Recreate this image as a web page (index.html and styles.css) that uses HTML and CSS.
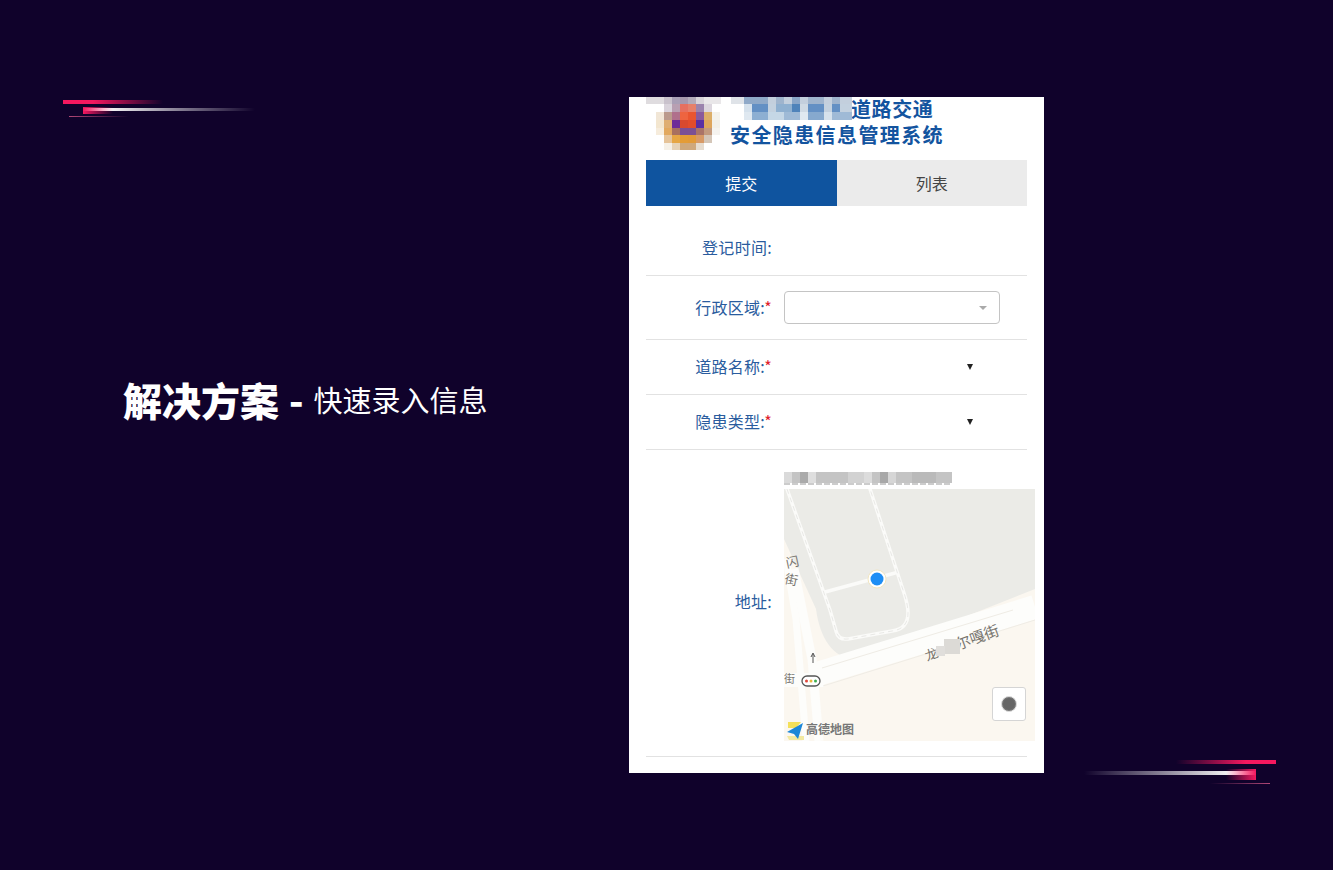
FILE: index.html
```html
<!DOCTYPE html>
<html lang="zh-CN">
<head>
    <meta charset="UTF-8">
    <title>解决方案 - 快速录入信息</title>
    <link rel="stylesheet" href="styles.css">
</head>
<body>
    <div class="slide">
        <!-- decorative streaks -->
        <div class="streaks streaks-top">
            <div class="streak-red"></div>
            <div class="streak-white"></div>
            <div class="streak-block"></div>
            <div class="streak-thin"></div>
        </div>
        <div class="streaks streaks-bottom">
            <div class="streak-red"></div>
            <div class="streak-white"></div>
            <div class="streak-block"></div>
            <div class="streak-thin"></div>
        </div>

        <h1 class="headline"><strong>解决方案</strong><b class="dash">-</b><span>快速录入信息</span></h1>

        <div class="phone">
            <header class="app-header">
                <svg class="logo-mosaic" width="76" height="53" viewBox="0 0 76 53" shape-rendering="crispEdges">
                    <rect x="0" y="0" width="18" height="7" fill="#dfdcdf"/>
                    <rect x="18" y="0" width="8" height="7" fill="#c9c2cc"/>
                    <rect x="26" y="0" width="8" height="7" fill="#a99fb6"/>
                    <rect x="34" y="0" width="8" height="7" fill="#a698ad"/>
                    <rect x="42" y="0" width="8" height="7" fill="#b3abba"/>
                    <rect x="50" y="0" width="8" height="7" fill="#d8d4da"/>
                    <rect x="58" y="0" width="17" height="7" fill="#e9e7e9"/>
                    <rect x="18" y="7" width="8" height="8" fill="#d9d3db"/>
                    <rect x="26" y="7" width="8" height="8" fill="#b89fb2"/>
                    <rect x="34" y="7" width="8" height="8" fill="#e6705f"/>
                    <rect x="42" y="7" width="8" height="8" fill="#e6806a"/>
                    <rect x="50" y="7" width="8" height="8" fill="#9b83ad"/>
                    <rect x="58" y="7" width="8" height="8" fill="#dcd6de"/>
                    <rect x="10" y="15" width="8" height="8" fill="#f1e6d6"/>
                    <rect x="18" y="15" width="8" height="8" fill="#bb9a8c"/>
                    <rect x="26" y="15" width="8" height="8" fill="#b0708c"/>
                    <rect x="34" y="15" width="8" height="8" fill="#ee6440"/>
                    <rect x="42" y="15" width="8" height="8" fill="#ea5530"/>
                    <rect x="50" y="15" width="8" height="8" fill="#8a5a9c"/>
                    <rect x="58" y="15" width="8" height="8" fill="#dcae68"/>
                    <rect x="66" y="15" width="8" height="8" fill="#f4f2ec"/>
                    <rect x="10" y="23" width="8" height="8" fill="#f3e6cf"/>
                    <rect x="18" y="23" width="8" height="8" fill="#dfae72"/>
                    <rect x="26" y="23" width="8" height="8" fill="#6e2c98"/>
                    <rect x="34" y="23" width="8" height="8" fill="#d8492f"/>
                    <rect x="42" y="23" width="8" height="8" fill="#e24c2c"/>
                    <rect x="50" y="23" width="8" height="8" fill="#5a2fa4"/>
                    <rect x="58" y="23" width="8" height="8" fill="#dea55c"/>
                    <rect x="66" y="23" width="8" height="8" fill="#f2efe8"/>
                    <rect x="10" y="31" width="8" height="7" fill="#f6ecdc"/>
                    <rect x="18" y="31" width="8" height="7" fill="#e2a85e"/>
                    <rect x="26" y="31" width="8" height="7" fill="#a8705f"/>
                    <rect x="34" y="31" width="8" height="7" fill="#7b4f96"/>
                    <rect x="42" y="31" width="8" height="7" fill="#7c5094"/>
                    <rect x="50" y="31" width="8" height="7" fill="#aa7468"/>
                    <rect x="58" y="31" width="8" height="7" fill="#c39a7e"/>
                    <rect x="66" y="31" width="8" height="7" fill="#f5f3ef"/>
                    <rect x="18" y="38" width="8" height="8" fill="#e6c49a"/>
                    <rect x="26" y="38" width="8" height="8" fill="#e6a644"/>
                    <rect x="34" y="38" width="8" height="8" fill="#e49c36"/>
                    <rect x="42" y="38" width="8" height="8" fill="#e29a38"/>
                    <rect x="50" y="38" width="8" height="8" fill="#d89a66"/>
                    <rect x="58" y="38" width="8" height="8" fill="#d4c6b8"/>
                    <rect x="18" y="46" width="8" height="7" fill="#f6f1e8"/>
                    <rect x="26" y="46" width="8" height="7" fill="#e6d2b6"/>
                    <rect x="34" y="46" width="8" height="7" fill="#cfa87a"/>
                    <rect x="42" y="46" width="8" height="7" fill="#cfa87c"/>
                    <rect x="50" y="46" width="8" height="7" fill="#e6dccf"/>
                </svg>
                <svg class="title-mosaic" width="121" height="23" viewBox="0 0 121 23" shape-rendering="crispEdges">
                    <rect x="0" y="0" width="13" height="7" fill="#dfe3e8"/>
                    <rect x="13" y="0" width="108" height="7" fill="#c3cfdd"/>
                    <rect x="13" y="0" width="24" height="7" fill="#8fa9c8"/>
                    <rect x="45" y="0" width="8" height="7" fill="#9fb4cd"/>
                    <rect x="61" y="0" width="8" height="7" fill="#8aa6c8"/>
                    <rect x="77" y="0" width="16" height="7" fill="#9fb4cd"/>
                    <rect x="101" y="0" width="8" height="7" fill="#9fb4cd"/>
                    <rect x="13" y="7" width="8" height="8" fill="#d5e1ec"/>
                    <rect x="21" y="7" width="16" height="8" fill="#6390c4"/>
                    <rect x="37" y="7" width="8" height="8" fill="#c3d1df"/>
                    <rect x="45" y="7" width="16" height="8" fill="#8fb0d0"/>
                    <rect x="61" y="7" width="8" height="8" fill="#4f83ba"/>
                    <rect x="69" y="7" width="8" height="8" fill="#cfdae4"/>
                    <rect x="77" y="7" width="16" height="8" fill="#6390c4"/>
                    <rect x="93" y="7" width="8" height="8" fill="#c3d1df"/>
                    <rect x="101" y="7" width="8" height="8" fill="#6390c4"/>
                    <rect x="109" y="7" width="12" height="8" fill="#c3d1df"/>
                    <rect x="13" y="15" width="8" height="8" fill="#dfe8f0"/>
                    <rect x="21" y="15" width="16" height="8" fill="#8dafd2"/>
                    <rect x="37" y="15" width="16" height="8" fill="#c5d7e6"/>
                    <rect x="53" y="15" width="16" height="8" fill="#9fbad6"/>
                    <rect x="69" y="15" width="8" height="8" fill="#e0e9f0"/>
                    <rect x="77" y="15" width="16" height="8" fill="#86a9ce"/>
                    <rect x="93" y="15" width="8" height="8" fill="#d6e2ec"/>
                    <rect x="101" y="15" width="20" height="8" fill="#9fbad6"/>
                </svg>
                <div class="app-title">
                    <div class="title-line-one">道路交通</div>
                    <div class="title-line-two">安全隐患信息管理系统</div>
                </div>
            </header>

            <nav class="tabs">
                <div class="tab tab-active">提交</div>
                <div class="tab">列表</div>
            </nav>

            <form class="form">
                <div class="form-row row-time">
                    <label class="form-label">登记时间:</label>
                </div>
                <div class="form-row row-region">
                    <label class="form-label">行政区域:<i>*</i></label>
                    <div class="select-box"><span class="select-arrow"></span></div>
                </div>
                <div class="form-row row-plain">
                    <label class="form-label">道路名称:<i>*</i></label>
                    <span class="native-arrow"></span>
                </div>
                <div class="form-row row-plain">
                    <label class="form-label">隐患类型:<i>*</i></label>
                    <span class="native-arrow"></span>
                </div>
                <div class="form-row row-address">
                    <label class="form-label">地址:</label>
                    <div class="address-field">
                        <svg class="coords-mosaic" width="168" height="14" viewBox="0 0 168 14" shape-rendering="crispEdges">
                            <rect width="168" height="11" fill="#c4c4c4"/>
                            <rect x="0" width="8" height="11" fill="#dadada"/>
                            <rect x="16" width="8" height="11" fill="#aaaaaa"/>
                            <rect x="24" width="8" height="11" fill="#dedede"/>
                            <rect x="64" width="16" height="11" fill="#d2d2d2"/>
                            <rect x="80" width="8" height="11" fill="#dcdcdc"/>
                            <rect x="96" width="8" height="11" fill="#a8a8a8"/>
                            <rect x="104" width="8" height="11" fill="#d6d6d6"/>
                            <rect x="128" width="24" height="11" fill="#bababa"/>
                            <path d="M0 12H168" stroke="#cccccc" stroke-width="2" stroke-dasharray="6 2"/>
                        </svg>
                        <div class="map">
                            <svg class="map-canvas" width="251" height="252" viewBox="0 0 251 252">
                                <rect width="251" height="252" fill="#ebebe7"/>
                                <path d="M0 252V50L32 120C36 150 50 172 75 170L251 100V252Z" fill="#fbf7f0"/>
                                <path d="M30 186L251 118" stroke="#fdfdfb" stroke-width="24" fill="none"/>
                                <path d="M0 191H40" stroke="#fdfdfb" stroke-width="14" fill="none"/>
                                <path d="M2 70L12 130L22 252" stroke="#fdfdfb" stroke-width="7" fill="none"/>
                                <path d="M10 80L28 170L35 252" stroke="#fdfdfb" stroke-width="9" fill="none"/>
                                <path d="M38 179L229 121M39 197L251 131" stroke="#efece5" stroke-width="1" fill="none"/>
                                <path d="M3 0L46 121L52 142Q54 151 64 150L108 142Q124 140 124 124Q124 116 120 104L86 0M41 103L111 84" stroke="#fbfbf9" stroke-width="3.500" fill="none" stroke-linecap="round"/>
                                <path d="M3 0L46 121L52 142Q54 151 64 150L108 142Q124 140 124 124Q124 116 120 104L86 0" stroke="#dcdcd8" stroke-width=".6" stroke-dasharray="5 4" fill="none"/>
                                <circle cx="93" cy="90" r="9" fill="#fff" stroke="#f2e6c0" stroke-width="1"/>
                                <circle cx="93" cy="90" r="6.500" fill="#1e8ef5"/>
                                <text class="map-label" transform="translate(3 79) rotate(-12)">闪</text>
                                <text class="map-label" transform="translate(0 94) rotate(12)">街</text>
                                <text class="map-label map-label-small" x="0" y="194">街</text>
                                <text class="map-label" transform="translate(143 172) rotate(-20)">龙</text>
                                <text class="map-label map-label-large" transform="translate(174 161) rotate(-20)">尔嘎街</text>
                                <rect x="160" y="150" width="16" height="15" fill="#dcdad6"/>
                                <rect x="152" y="157" width="9" height="10" fill="#e0dedb"/>
                                <path d="M29 174V165M27 168L29 164L31 168" stroke="#555" stroke-width="1" fill="none"/>
                                <rect x="18" y="187" width="18" height="10" rx="5" fill="#fff" stroke="#555" stroke-width="1.300"/>
                                <circle cx="22.500" cy="192" r="1.500" fill="#e0473c"/>
                                <circle cx="27" cy="192" r="1.500" fill="#e8b83c"/>
                                <circle cx="31.500" cy="192" r="1.500" fill="#3fae52"/>
                                <path d="M4 233H17L12 239H4Z" fill="#f4e05a"/>
                                <path d="M3 247H20V251H5Z" fill="#f3e9a0"/>
                                <path d="M19 234L3 243L10 245L14 250Z" fill="#1c87d8"/>
                                <text class="map-brand" x="22" y="245">高德地图</text>
                            </svg>
                            <div class="locate-button"><span class="locate-dot"></span></div>
                        </div>
                    </div>
                </div>
            </form>
        </div>
    </div>
</body>
</html>
```
FILE: styles.css
```css
* {
    box-sizing: border-box;
    margin: 0;
    padding: 0;
}

body {
    background: #10022b;
    font-family: "Noto Sans CJK SC", "Noto Sans", sans-serif;
    overflow: hidden;
}

.slide {
    position: relative;
    display: flex;
    align-items: flex-start;
    width: 1333px;
    height: 870px;
    padding: 97px 0 0 123px;
}

/* streaks */
.streaks {
    position: absolute;
    width: 200px;
    height: 26px;
}

.streaks div {
    position: absolute;
}

.streaks-top {
    left: 63px;
    top: 99px;
}

.streaks-bottom {
    left: 1076px;
    top: 759px;
    transform: scaleX(-1);
}

.streak-red {
    left: 0;
    top: 1px;
    width: 100px;
    height: 4px;
    background: linear-gradient(to right, #f5185f, #f5185f 30%, rgba(245, 24, 95, 0));
}

.streak-white {
    left: 20px;
    top: 9px;
    width: 172px;
    height: 3px;
    background: linear-gradient(to right, #fff, #fff 12%, rgba(255, 255, 255, 0.5) 55%, rgba(255, 255, 255, 0));
}

.streak-block {
    left: 20px;
    top: 8px;
    width: 30px;
    height: 7px;
    background: linear-gradient(to right, #f5185f, rgba(245, 24, 95, 0));
}

.streak-thin {
    left: 6px;
    top: 17px;
    width: 60px;
    height: 1px;
    background: linear-gradient(to right, rgba(245, 100, 150, 0.7), rgba(245, 24, 95, 0));
}

.streaks-bottom .streak-white {
    top: 12px;
    height: 4px;
}

.streaks-bottom .streak-block {
    top: 10px;
    height: 11px;
}

.streaks-bottom .streak-thin {
    top: 24px;
}

/* headline */
.headline {
    display: flex;
    align-items: center;
    width: 506px;
    margin-top: 275px;
    color: #fff;
    font-weight: 400;
    line-height: 54px;
    white-space: nowrap;
}

.headline strong {
    font-size: 39px;
    font-weight: 900;
}

.headline .dash {
    margin: 0 10px;
    font-size: 38px;
    font-weight: 900;
}

.headline span {
    font-size: 29px;
}

/* phone screenshot */
.phone {
    width: 415px;
    height: 676px;
    padding: 0 17px;
    background: #fff;
}

.app-header {
    position: relative;
    height: 63px;
}

.logo-mosaic {
    position: absolute;
    left: 0;
    top: 0;
}

.title-mosaic {
    position: absolute;
    left: 85px;
    top: 0;
}

.app-title {
    color: #13549f;
    font-weight: 700;
    font-size: 20px;
    line-height: 26px;
    padding: 0 0 0 84px;
}

.title-line-one {
    height: 25px;
    line-height: 24px;
    padding-left: 121px;
    letter-spacing: 0.6px;
}

.title-line-two {
    letter-spacing: 1.4px;
}

.tabs {
    display: flex;
    height: 46px;
    width: 381px;
}

.tab {
    flex: 1;
    display: flex;
    align-items: center;
    justify-content: center;
    padding-bottom: 1px;
    background: #ebebeb;
    color: #444;
    font-size: 16px;
}

.tab-active {
    background: #0f549f;
    color: #fff;
}

.form-row {
    display: flex;
    align-items: center;
    gap: 12px;
    width: 381px;
    border-bottom: 1px solid #e2e2e2;
}

.form-label {
    flex: 0 0 126px;
    padding-bottom: 2px;
    text-align: right;
    color: #2a5c9e;
    font-size: 16px;
    letter-spacing: 0.3px;
    white-space: nowrap;
}

.form-label i {
    color: #e0202a;
    font-style: normal;
}

.row-time {
    height: 70px;
    padding-top: 14px;
}

.row-region {
    height: 64px;
}

.row-plain {
    height: 55px;
}

.select-box {
    position: relative;
    width: 216px;
    height: 33px;
    border: 1px solid #c4c4c4;
    border-radius: 4px;
}

.select-arrow {
    position: absolute;
    right: 12px;
    top: 14px;
    border-top: 4px solid #aaa;
    border-left: 4px solid transparent;
    border-right: 4px solid transparent;
}

.native-arrow {
    margin-left: 183px;
    border-top: 6px solid #222;
    border-left: 3px solid transparent;
    border-right: 3px solid transparent;
}

.row-address {
    height: 307px;
    padding: 22px 0 15px;
}

.row-address .form-label {
    padding-bottom: 12px;
}

.address-field {
    flex: 0 0 251px;
    width: 251px;
}

.coords-mosaic {
    display: block;
    margin-bottom: 3px;
}

.map {
    position: relative;
    width: 251px;
    height: 252px;
}

.map-canvas {
    display: block;
}

.map-label {
    font-size: 13px;
    fill: #77746e;
}

.map-label-small {
    font-size: 11px;
}

.map-label-large {
    font-size: 15px;
}

.map-brand {
    font-size: 12px;
    font-weight: 700;
    fill: #777;
}

.locate-button {
    position: absolute;
    left: 208px;
    top: 198px;
    display: flex;
    align-items: center;
    justify-content: center;
    width: 34px;
    height: 34px;
    background: #fff;
    border: 1px solid #d5d5d5;
    border-radius: 3px;
}

.locate-dot {
    width: 16px;
    height: 16px;
    background: #666;
    border: 1px solid #ddd;
    border-radius: 50%;
    box-shadow: inset 0 0 0 1px #777;
}
```
